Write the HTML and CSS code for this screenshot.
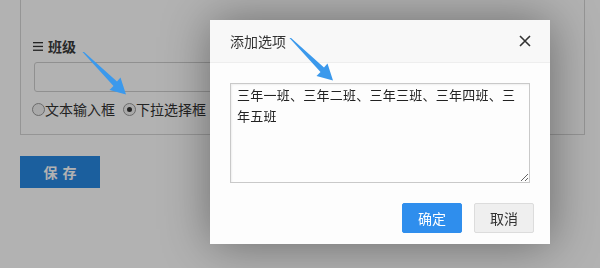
FILE: index.html
```html
<!DOCTYPE html>
<html lang="zh">
<head>
<meta charset="utf-8">
<title>添加选项</title>
<link rel="stylesheet" href="styles.css">
</head>
<body>
<div class="page">
  <div class="panel">
    <div class="field-label">
      <svg class="menu-icon" width="10" height="9" viewBox="0 0 10 9"><rect x="0" y="0" width="10" height="1.3" fill="#333"/><rect x="0" y="3.8" width="10" height="1.3" fill="#333"/><rect x="0" y="7.6" width="10" height="1.3" fill="#333"/></svg>
      <span class="label-text">班级</span>
    </div>
    <div class="text-input"></div>
    <div class="radios">
      <span class="radio"><span class="dot"></span></span><span class="radio-text">文本输入框</span>
      <span class="radio checked"><span class="dot"></span></span><span class="radio-text">下拉选择框</span>
    </div>
  </div>
  <button class="save-btn">保存</button>
</div>

<div class="overlay"></div>

<div class="dialog">
  <div class="dialog-header">
    <span class="dialog-title">添加选项</span>
    <svg class="close" width="12" height="12" viewBox="0 0 12 12"><path d="M1 1 L11 11 M11 1 L1 11" stroke="#333" stroke-width="1.6"/></svg>
  </div>
  <div class="dialog-body">
    <textarea class="options">三年一班、三年二班、三年三班、三年四班、三年五班</textarea>
  </div>
  <div class="dialog-footer">
    <button class="btn btn-primary">确定</button>
    <button class="btn btn-default">取消</button>
  </div>
</div>

<svg class="arrow arrow-one" width="48" height="46" viewBox="0 0 48 46"><polygon points="0.5,0 31.5,34 27.5,38 44,42.5 38.5,25.5 35,29.5 1.5,-0.5" fill="#3b99ec"/></svg>
<svg class="arrow arrow-two" width="48" height="46" viewBox="0 0 48 46"><polygon points="0.5,0 31.5,34 27.5,38 44,42.5 38.5,25.5 35,29.5 1.5,-0.5" fill="#3b99ec"/></svg>
</body>
</html>
```
FILE: styles.css
```css
* { box-sizing: border-box; }
html, body {
  margin: 0;
  padding: 0;
  width: 600px;
  height: 268px;
  overflow: hidden;
  background: #ffffff;
  font-family: "Noto Sans CJK SC", "Noto Sans", sans-serif;
  color: #333;
}
.page {
  padding: 0 15px 0 20px;
}
.panel {
  margin-top: -20px;
  border: 1px solid #d6d6d6;
  padding: 55px 12px 15px 11px;
}
.field-label {
  display: flex;
  align-items: center;
  height: 20px;
  padding-left: 1px;
  font-size: 14px;
  line-height: 20px;
}
.menu-icon { margin-right: 5px; }
.label-text { font-weight: bold; color: #3a3a3a; }
.text-input {
  margin: 6px 0 0 2px;
  width: 470px;
  height: 30px;
  border: 1px solid #cfcfcf;
  border-radius: 3px;
  background: #fff;
}
.radios {
  display: flex;
  align-items: center;
  height: 20px;
  margin-top: 7px;
  font-size: 14px;
  line-height: 20px;
}
.radio {
  width: 13px;
  height: 13px;
  border-radius: 50%;
  border: 1px solid #9a9a9a;
  background: #f2f2f2;
  display: flex;
  align-items: center;
  justify-content: center;
}
.radio .dot { width: 5px; height: 5px; border-radius: 50%; }
.radio.checked .dot { background: #333; }
.radio-text { margin-right: 8px; }
.save-btn {
  display: block;
  margin-top: 21px;
  width: 80px;
  height: 32px;
  border: none;
  background: #2888e3;
  color: #fff;
  font-family: "Noto Sans CJK SC", sans-serif;
  font-size: 14px;
  font-weight: bold;
  letter-spacing: 5px;
  padding: 0 0 0 5px;
}
.overlay {
  position: fixed;
  inset: 0;
  background: rgba(0, 0, 0, 0.3);
}
.dialog {
  position: absolute;
  left: 210px;
  top: 20px;
  width: 340px;
  background: #fdfdfd;
  box-shadow: 1px 1px 45px rgba(0, 0, 0, 0.4);
}
.dialog-header {
  height: 43px;
  background: #f8f8f8;
  border-bottom: 1px solid #eeeeee;
  display: flex;
  align-items: center;
  justify-content: space-between;
  padding: 0 19px 0 20px;
}
.dialog-title {
  font-size: 14px;
  color: #333;
}
.dialog-body {
  padding: 20px 20px 0;
}
.options {
  display: block;
  width: 300px;
  height: 100px;
  margin: 0;
  border: 1px solid #c9c9c9;
  box-shadow: inset 1px 1px 2px rgba(0, 0, 0, 0.06);
  padding: 0 6px;
  font-family: "Noto Sans CJK SC", sans-serif;
  font-size: 13px;
  letter-spacing: 0.25px;
  line-height: 21px;
  color: #222;
  background: #fdfdfd;
  outline: none;
}
.dialog-footer {
  display: flex;
  justify-content: flex-end;
  gap: 12px;
  padding: 20px 16px 11px;
}
.btn {
  width: 60px;
  height: 30px;
  border-radius: 2px;
  font-family: "Noto Sans CJK SC", sans-serif;
  font-size: 14px;
  padding: 0;
}
.btn-primary {
  background: #2f8eed;
  border: 1px solid #2f8eed;
  color: #fff;
}
.btn-default {
  background: #efefef;
  border: 1px solid #dcdcdc;
  color: #333;
}
.arrow {
  position: absolute;
}
.arrow-one { left: 82px; top: 52px; }
.arrow-two { left: 289px; top: 38px; }
```
